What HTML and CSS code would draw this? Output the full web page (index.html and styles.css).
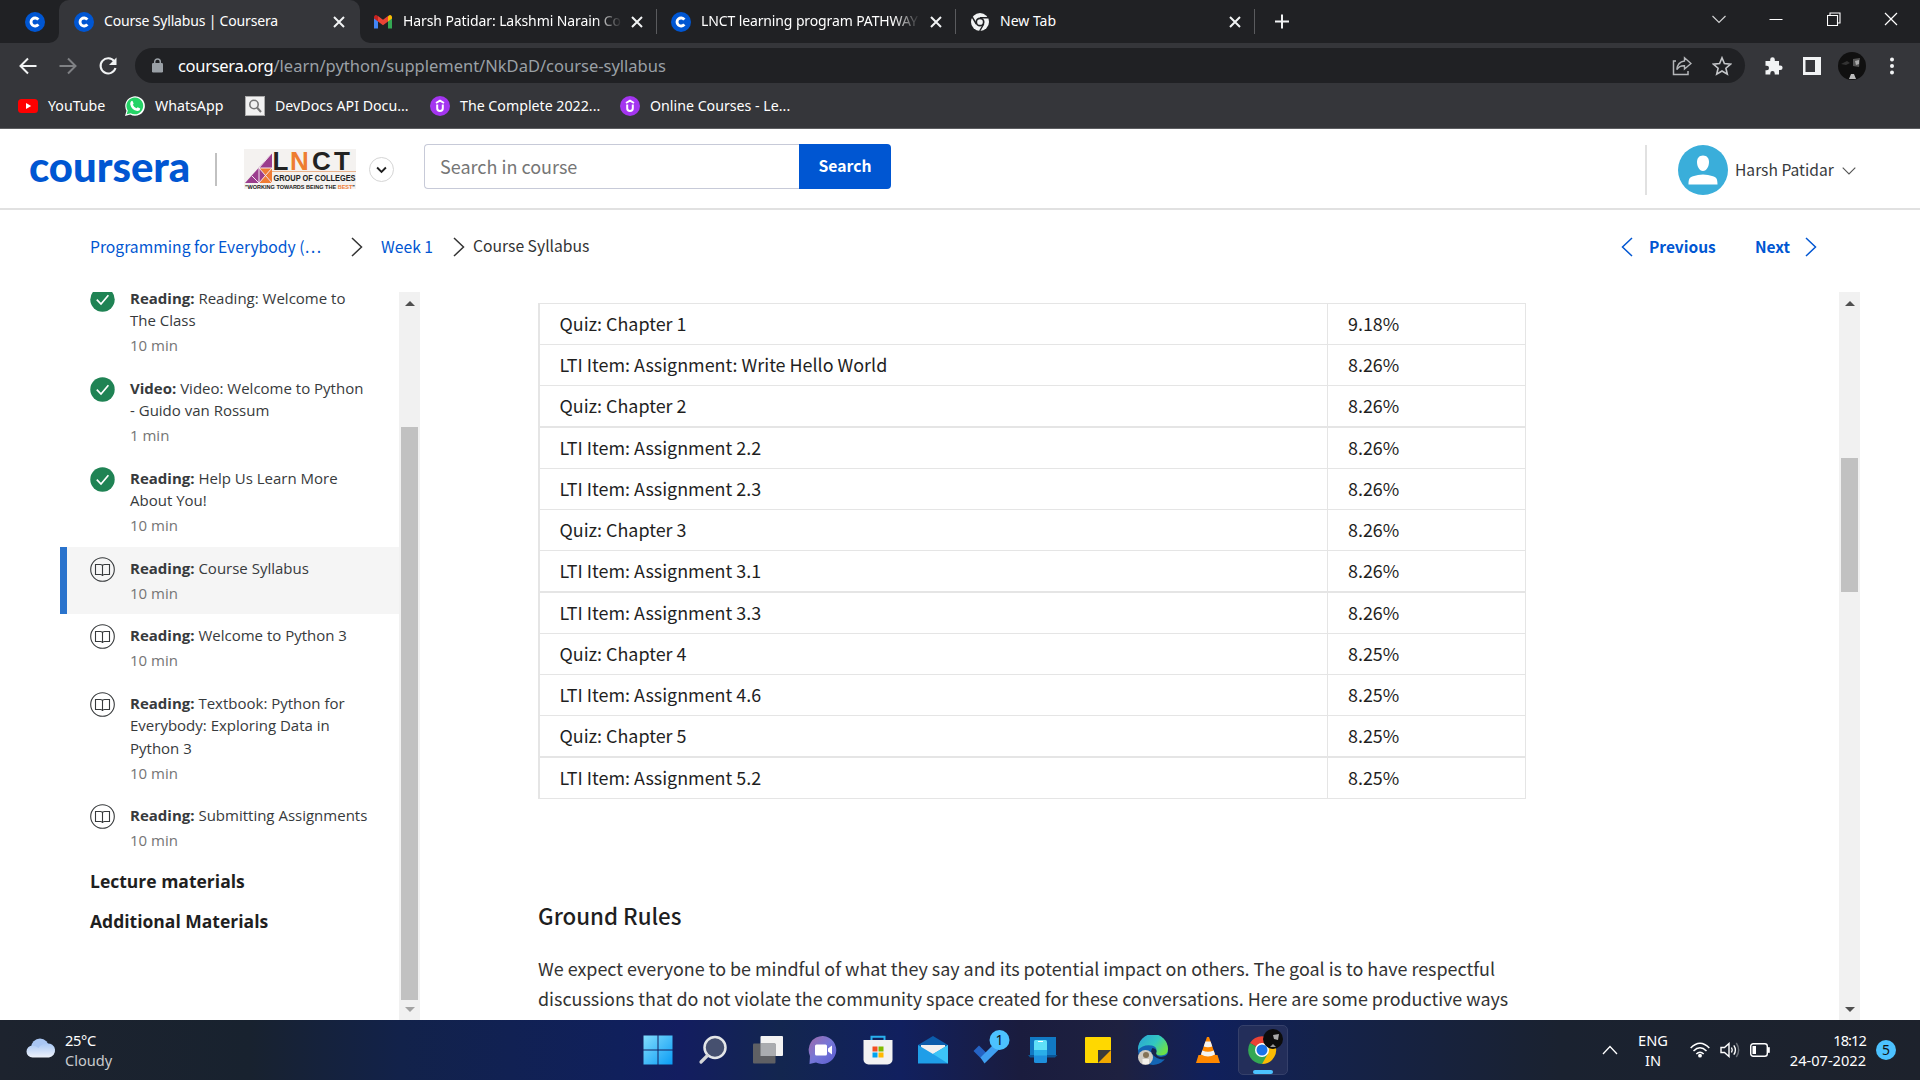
FILE: index.html
```html
<!DOCTYPE html>
<html lang="en">
<head>
<meta charset="utf-8">
<title>Course Syllabus | Coursera</title>
<link rel="stylesheet" href="styles.css">
</head>
<body>
<svg class="defs" width="0" height="0">
  <defs>
    <symbol id="i-c" viewBox="0 0 20 20"><circle cx="10" cy="10" r="10" fill="#0056d2"/><path d="M13.3 7.7A4 4 0 1 0 13.3 12.3" fill="none" stroke="#fff" stroke-width="2.9"/></symbol>
    <symbol id="i-x" viewBox="0 0 12 12"><path d="M1 1L11 11M11 1L1 11" fill="none" stroke="#f1f3f4" stroke-width="2"/></symbol>
    <symbol id="i-udemy" viewBox="0 0 20 20"><circle cx="10" cy="10" r="10" fill="#a435f0"/><path d="M6 7L10 4.700L14 7M7.200 8.500V12.200A2.800 2.800 0 0 0 12.800 12.200V8.500" fill="none" stroke="#fff" stroke-width="2"/></symbol>
    <symbol id="i-right" viewBox="0 0 12 20"><path d="M1 1L10.5 10L1 19" fill="none" stroke="currentColor" stroke-width="1.5"/></symbol>
    <symbol id="i-done" viewBox="0 0 25 25"><circle cx="12.5" cy="12.5" r="12.2" fill="#1f8354"/><path d="M6.8 12.6L11 17L18.4 8.3" fill="none" stroke="#fff" stroke-width="1.7"/></symbol>
    <symbol id="i-book" viewBox="0 0 25 25"><g fill="none" stroke="#373a3c" stroke-width="1.1"><circle cx="12.5" cy="12.5" r="11.8"/><path d="M5.5 7.5H10.5Q12.5 7.5 12.5 9.3Q12.5 7.5 14.5 7.5H19.5V17.5H14.5Q12.5 17.5 12.5 19Q12.5 17.5 10.5 17.5H5.5ZM12.5 9V19"/></g></symbol>
  </defs>
</svg>

<header class="browser">
  <div class="tabs">
    <div class="tab pinned"><svg class="fav"><use href="#i-c"/></svg></div>
    <div class="tab active"><svg class="fav"><use href="#i-c"/></svg><span class="title">Course Syllabus | Coursera</span><svg class="x"><use href="#i-x"/></svg></div>
    <div class="tab gmail">
      <svg class="fav" viewBox="0 0 20 20"><path d="M1 5v11.5h4V8z" fill="#4285f4"/><path d="M15 8v8.500h4V5z" fill="#34a853"/><path d="M15 4.500v5L19 6.500V5a2 2 0 0 0-3.200-1.500z" fill="#fbbc04"/><path d="M5 9.500v-5.500l5 3.800l5-3.800v5.500l-5 3.800z" fill="#ea4335"/><path d="M1 5v1.500l4 3V4.300L4.200 3.500A2 2 0 0 0 1 5z" fill="#c5221f"/></svg>
      <span class="title fade">Harsh Patidar: Lakshmi Narain Co</span><svg class="x"><use href="#i-x"/></svg></div>
    <div class="tab lnct"><svg class="fav"><use href="#i-c"/></svg><span class="title fade">LNCT learning program PATHWAY</span><svg class="x"><use href="#i-x"/></svg></div>
    <div class="tab newtab">
      <svg class="fav" viewBox="0 0 20 20"><circle cx="10" cy="10" r="9" fill="#f1f3f4"/><circle cx="10" cy="10" r="3.700" fill="#f1f3f4" stroke="#202124" stroke-width="1.700"/><path d="M10 5.800H18M6.300 12L2.300 5.200M13.700 12L9.700 19" stroke="#202124" stroke-width="1.500"/></svg>
      <span class="title">New Tab</span><svg class="x"><use href="#i-x"/></svg></div>
    <svg class="plus" viewBox="0 0 16 16"><path d="M8 1V15M1 8H15" stroke="#f1f3f4" stroke-width="2"/></svg>
    <div class="winctl">
      <svg viewBox="0 0 14 14"><path d="M.5 4L7 10.500L13.500 4" fill="none" stroke="#d0d1d2" stroke-width="1.200"/></svg>
      <svg viewBox="0 0 14 14"><path d="M.5 7.500H13.500" stroke="#fff"/></svg>
      <svg viewBox="0 0 14 14"><path d="M.5 3.500H10.500V13.500H.5ZM3 3V1H13V11H11" fill="none" stroke="#fff" stroke-width="1.100"/></svg>
      <svg viewBox="0 0 14 14"><path d="M1 1L13 13M13 1L1 13" stroke="#fff" stroke-width="1.200"/></svg>
    </div>
  </div>
  <div class="toolbar">
    <svg class="nav" viewBox="0 0 20 20"><path d="M18.500 10H3M10 2.500L2.500 10L10 17.500" fill="none" stroke="#f1f3f4" stroke-width="2"/></svg>
    <svg class="nav" viewBox="0 0 20 20"><path d="M1.500 10H17M10 2.500L17.500 10L10 17.500" fill="none" stroke="#7f8184" stroke-width="2"/></svg>
    <svg class="nav" viewBox="0 0 20 20"><path d="M16.300 5.300A7.600 7.600 0 1 0 17.500 12" fill="none" stroke="#f1f3f4" stroke-width="2.100"/><path d="M18.500 1.500V9H11Z" fill="#f1f3f4"/></svg>
    <div class="omnibox">
      <svg class="lock" viewBox="0 0 11 15"><rect y="5" width="11" height="9.500" rx="1.200" fill="#9aa0a6"/><path d="M2.700 6V3.700a2.800 2.800 0 0 1 5.600 0V6" fill="none" stroke="#9aa0a6" stroke-width="1.500"/></svg>
      <span class="url"><span class="host">coursera.org</span><span class="path">/learn/python/supplement/NkDaD/course-syllabus</span></span>
      <svg class="share" viewBox="0 0 20 20"><path d="M4 5H1.500V18.500H16V15" fill="none" stroke="#b4b6b9" stroke-width="1.500"/><path d="M12.500 1.800L19 7.500L12.500 13V9.800Q7.500 9.500 4.800 13.500Q5.500 6 12.500 5Z" fill="none" stroke="#b4b6b9" stroke-width="1.400"/></svg>
      <svg class="star" viewBox="0 0 20 20"><path d="M10 1.800L12.400 7.600L18.600 8.100L13.900 12.200L15.300 18.200L10 15L4.700 18.200L6.100 12.200L1.400 8.100L7.600 7.600Z" fill="none" stroke="#c4c6c9" stroke-width="1.600"/></svg>
    </div>
    <svg class="ext" viewBox="0 0 20 20"><path d="M1.500 5h4.700V3.500a2.300 2.300 0 0 1 4.600 0V5H15v4.500h1.300a2.300 2.300 0 0 1 0 4.600H15V18.500h-4.300v-1.200a2.200 2.200 0 0 0-4.400 0v1.200H1.500v-4.300h1.300a2.200 2.200 0 0 0 0-4.400H1.500z" fill="#f1f3f4"/></svg>
    <svg class="panel" viewBox="0 0 20 20"><path d="M1 1h18v18H1zM3.500 4v12h9.500V4z" fill="#f1f3f4" fill-rule="evenodd"/></svg>
    <svg class="me" viewBox="0 0 28 28"><circle cx="14" cy="14" r="14" fill="#101010"/><path d="M15 7l7-1l-1 9l-6-1z" fill="#555"/><path d="M17 9l4-1v4l-3 1z" fill="#aaa"/><path d="M3 12l6-3l3 2l-4 2z" fill="#333"/><path d="M13 22h3l2 5h-7z" fill="#bbb"/></svg>
    <svg class="dots" viewBox="0 0 4 18"><circle cx="2" cy="2.500" r="2" fill="#f1f3f4"/><circle cx="2" cy="9" r="2" fill="#f1f3f4"/><circle cx="2" cy="15.500" r="2" fill="#f1f3f4"/></svg>
  </div>
  <div class="bookmarks">
    <div class="bm b1"><svg class="fav" viewBox="0 0 20 20"><rect y="3" width="20" height="14" rx="3.500" fill="#f00"/><path d="M8 7V13L13.200 10Z" fill="#fff"/></svg><span>YouTube</span></div>
    <div class="bm b2"><svg class="fav" viewBox="0 0 20 20"><path d="M0 20L1.500 14.800A9.800 9.800 0 1 1 5.300 18.600Z" fill="#fff"/><path d="M1.700 18.300L2.800 14.500A8.400 8.400 0 1 1 5.700 17.200Z" fill="#25d366"/><path d="M6.200 5.200Q7.300 4.300 7.800 5.500L8.600 7.400Q8.500 8.200 7.800 8.800Q9 11.300 11.500 12.300L12.700 11.200L15.200 12.500Q15 15 12.300 15Q6.500 14 5.200 8.200Q5.100 6.200 6.200 5.200Z" fill="#fff"/></svg><span>WhatsApp</span></div>
    <div class="bm b3"><svg class="fav" viewBox="0 0 20 20"><rect x=".5" y=".5" width="19" height="19" fill="#f1f1f1" stroke="#aaa"/><circle cx="9" cy="8.500" r="4.200" fill="none" stroke="#777" stroke-width="1.600"/><path d="M12 11.500L16 16" stroke="#777" stroke-width="2"/></svg><span>DevDocs API Docu...</span></div>
    <div class="bm b4"><svg class="fav"><use href="#i-udemy"/></svg><span>The Complete 2022...</span></div>
    <div class="bm b5"><svg class="fav"><use href="#i-udemy"/></svg><span>Online Courses - Le...</span></div>
  </div>
</header>

<main class="page">
  <div class="site">
    <div class="logo">coursera</div>
    <div class="rule1"></div>
    <svg class="college" viewBox="0 0 112 40">
      <rect width="112" height="40" fill="#f4f2f0"/>
      <path d="M1 34L28 4V34Z" fill="#9b3d8d"/><path d="M15 19H28V34Z" fill="#f07c35"/><path d="M15 34L21 26L28 34Z" fill="#f07c35"/><path d="M8 27L15 34V19L28 34M15 19L28 4M15 19H28L15 34" fill="none" stroke="#f3e6ee" stroke-width="1"/>
      <text x="28.500" y="21" class="lg">L</text><text x="46" y="21" class="lg orange">N</text><text x="68" y="21" class="lg">C</text><text x="90" y="21" class="lg">T</text>
      <path d="M28 22.500H112" stroke="#e8a070" stroke-width=".8"/>
      <text x="29.500" y="32" class="md" textLength="82" lengthAdjust="spacingAndGlyphs">GROUP OF COLLEGES</text>
      <text x="1" y="39.500" class="sm" textLength="110" lengthAdjust="spacingAndGlyphs">"WORKING TOWARDS BEING THE <tspan fill="#f07c35">BEST</tspan>"</text>
    </svg>
    <div class="drop"><svg viewBox="0 0 10 7"><path d="M1 1.200L5 5.200L9 1.200" fill="none" stroke="#1f1f1f" stroke-width="1.700"/></svg></div>
    <div class="search"><div class="field">Search in course</div><div class="btn">Search</div></div>
    <div class="user">
      <svg class="avatar" viewBox="0 0 50 50"><circle cx="25" cy="25" r="25" fill="#3aaeda"/><path d="M25 10.500c4 0 6 2.900 6 6.500c0 4.300-2.300 9-6 9s-6-4.700-6-9c0-3.600 2-6.500 6-6.500zM10.500 39.500c0-5 .8-7.200 4.500-8.200q5-1.800 10-1.800t10 1.800c3.700 1 4.500 3.200 4.500 8.200z" fill="#fff"/></svg>
      <span class="name">Harsh Patidar</span>
      <svg class="caret" viewBox="0 0 14 8"><path d="M.7.700L7 7L13.300.7" fill="none" stroke="#555" stroke-width="1.100"/></svg>
    </div>
  </div>
  <div class="crumbs">
    <span class="link c1">Programming for Everybody (…</span><svg class="chev v1"><use href="#i-right"/></svg>
    <span class="link c2">Week 1</span><svg class="chev v2"><use href="#i-right"/></svg>
    <span class="c3">Course Syllabus</span>
    <div class="pager"><svg class="chev flip"><use href="#i-right"/></svg><b class="p1">Previous</b><b class="p2">Next</b><svg class="chev"><use href="#i-right"/></svg></div>
  </div>
  <div class="body">
    <aside class="side">
      <div class="list">
        <div class="item first"><svg><use href="#i-done"/></svg><div><p><b>Reading:</b> Reading: Welcome to<br>The Class</p><small>10 min</small></div></div>
        <div class="item"><svg><use href="#i-done"/></svg><div><p><b>Video:</b> Video: Welcome to Python<br>- Guido van Rossum</p><small>1 min</small></div></div>
        <div class="item"><svg><use href="#i-done"/></svg><div><p><b>Reading:</b> Help Us Learn More<br>About You!</p><small>10 min</small></div></div>
        <div class="item current"><svg><use href="#i-book"/></svg><div><p><b>Reading:</b> Course Syllabus</p><small>10 min</small></div></div>
        <div class="item"><svg><use href="#i-book"/></svg><div><p><b>Reading:</b> Welcome to Python 3</p><small>10 min</small></div></div>
        <div class="item"><svg><use href="#i-book"/></svg><div><p><b>Reading:</b> Textbook: Python for<br>Everybody: Exploring Data in<br>Python 3</p><small>10 min</small></div></div>
        <div class="item last"><svg><use href="#i-book"/></svg><div><p><b>Reading:</b> Submitting Assignments</p><small>10 min</small></div></div>
        <h3>Lecture materials</h3>
        <h3>Additional Materials</h3>
      </div>
      <div class="bar left"><i class="up"></i><div class="thumb"></div><i class="down dim"></i></div>
    </aside>
    <article class="content">
      <div class="grades">
        <div class="row"><span>Quiz: Chapter 1</span><span>9.18%</span></div>
        <div class="row"><span>LTI Item: Assignment: Write Hello World</span><span>8.26%</span></div>
        <div class="row thick"><span>Quiz: Chapter 2</span><span>8.26%</span></div>
        <div class="row"><span>LTI Item: Assignment 2.2</span><span>8.26%</span></div>
        <div class="row"><span>LTI Item: Assignment 2.3</span><span>8.26%</span></div>
        <div class="row"><span>Quiz: Chapter 3</span><span>8.26%</span></div>
        <div class="row thick"><span>LTI Item: Assignment 3.1</span><span>8.26%</span></div>
        <div class="row"><span>LTI Item: Assignment 3.3</span><span>8.26%</span></div>
        <div class="row"><span>Quiz: Chapter 4</span><span>8.25%</span></div>
        <div class="row"><span>LTI Item: Assignment 4.6</span><span>8.25%</span></div>
        <div class="row thick"><span>Quiz: Chapter 5</span><span>8.25%</span></div>
        <div class="row"><span>LTI Item: Assignment 5.2</span><span>8.25%</span></div>
      </div>
      <h2>Ground Rules</h2>
      <p class="para">We expect everyone to be mindful of what they say and its potential impact on others. The goal is to have respectful<br>discussions that do not violate the community space created for these conversations. Here are some productive ways</p>
    </article>
    <div class="bar right"><i class="up"></i><div class="thumb"></div><i class="down"></i></div>
  </div>
</main>

<footer class="taskbar">
  <div class="weather">
    <svg viewBox="0 0 30 20"><defs><linearGradient id="cl" x2="0" y2="1"><stop stop-color="#a9c8f5"/><stop offset="1" stop-color="#eef2fa"/></linearGradient></defs><circle cx="14" cy="9.500" r="9" fill="#a9c6f3"/><path d="M6.500 19.500A6 6 0 0 1 6.500 7.500Q10 7.500 12.500 10Q15 5.500 21 5.500A7 7 0 0 1 23 19.500Z" fill="url(#cl)"/></svg>
    <div><div class="w1">25°C</div><div class="w2">Cloudy</div></div>
  </div>
  <div class="apps">
    <div class="app"><svg viewBox="0 0 30 30"><defs><linearGradient id="win" x2="1" y2="1"><stop stop-color="#82dcfc"/><stop offset="1" stop-color="#0a9cf5"/></linearGradient></defs><path d="M.5.500H14.500V14.500H.5ZM15.500.500H29.500V14.500H15.500ZM.5 15.500H14.500V29.500H.5ZM15.500 15.500H29.500V29.500H15.500Z" fill="url(#win)"/></svg></div>
    <div class="app"><svg viewBox="0 0 30 30"><circle cx="17" cy="12.500" r="10.500" fill="#46506f" stroke="#e4e6e8" stroke-width="2.500"/><path d="M9.500 20.500L3 27" stroke="#d4d6d8" stroke-width="3.200" stroke-linecap="round"/></svg></div>
    <div class="app"><svg viewBox="0 0 30 30"><rect x="7.500" y="1" width="22.500" height="20" rx="1" fill="#f3f3f3"/><rect x="0" y="8.500" width="22.500" height="20" rx="1" fill="#5f6064"/><path d="M7.500 8.500h15V21h-15z" fill="#aaacb0"/></svg></div>
    <div class="app"><svg viewBox="0 0 30 30"><defs><linearGradient id="ch" x2="1" y2="1"><stop stop-color="#a06aa8"/><stop offset=".5" stop-color="#7577d8"/><stop offset="1" stop-color="#5a5bd0"/></linearGradient></defs><path d="M15 1A14 14 0 1 1 8 27.500L1.500 29L2 21A14 14 0 0 1 15 1Z" fill="url(#ch)"/><rect x="7" y="9.500" width="12" height="11" rx="1.500" fill="#fff"/><path d="M20 13.500L24 10.500V19.500L20 16.500Z" fill="#fff"/></svg></div>
    <div class="app"><svg viewBox="0 0 30 30"><path d="M8.500 7V1.800H21.500V7" fill="none" stroke="#28b0ee" stroke-width="2"/><path d="M.5 5H29.500V24.500A5 5 0 0 1 24.500 29.500H5.500A5 5 0 0 1 .5 24.500Z" fill="#f2f2f2"/><path d="M9.500 11.500h5v5h-5z" fill="#f25022"/><path d="M15.500 11.500h5v5h-5z" fill="#7fba00"/><path d="M9.500 17.500h5v5h-5z" fill="#00a4ef"/><path d="M15.500 17.500h5v5h-5z" fill="#ffb900"/></svg></div>
    <div class="app"><svg viewBox="0 0 30 30"><path d="M0 10L15 1L30 10V15H0Z" fill="#0b5cab"/><path d="M3 10H27V20H3Z" fill="#f0f0f0"/><path d="M0 10L15 19L30 10V28.500H0Z" fill="#1f9ee8"/><path d="M30 10L15 19L30 28.500Z" fill="#3cc4f7"/></svg></div>
    <div class="app"><svg class="todo" viewBox="0 0 37 37"><path d="M.5 22L6 16.500L15.500 26L10.500 32Z" fill="#2563c4"/><path d="M7.500 28.500L25 11L30 16.500L11.500 34.500Z" fill="#3f9ff0"/><circle cx="26.500" cy="11" r="10" fill="#4cc2ff"/><text x="26.500" y="16.300" class="badge">1</text></svg></div>
    <div class="app"><svg viewBox="0 0 30 30"><path d="M2 2H28V20H2Z" fill="#1179c4"/><path d="M0 20H29.500L27 22.500H2Z" fill="#0a5596"/><rect x="6" y="5" width="13" height="23" rx="1.500" fill="#1e8fdc"/><path d="M6 6.500A1.500 1.500 0 0 1 7.500 5H17.500A1.500 1.500 0 0 1 19 6.500V15H6Z" fill="#5fe0f8"/><path d="M6 15h13v5.500H6z" fill="#2aaee8"/><path d="M10 6.500h5" stroke="#fff"/></svg></div>
    <div class="app"><svg viewBox="0 0 30 30"><rect x="2" y="2" width="26" height="26" rx="1" fill="#ffd800"/><path d="M15 15H28V28H15Z" fill="#f0a800"/><path d="M15 15H28L15 28Z" fill="#3a3a3a"/></svg></div>
    <div class="app"><svg viewBox="0 0 30 30"><defs><linearGradient id="ed" x2="1" y2=".6"><stop stop-color="#2a9fd8"/><stop offset=".6" stop-color="#32c8c0"/><stop offset="1" stop-color="#6be04a"/></linearGradient></defs><circle cx="15" cy="15" r="15" fill="#1465b4"/><path d="M0 14A15 15 0 0 1 30 14Q30 20.500 23 20.500Q17 20 18 17.500Q20 12 14 10.500Q5 9 0 15Z" fill="url(#ed)"/><path d="M18.500 17Q17 21 23 22Q27 22 30 19V14L31 23L28 24Q20 26 14 19Q12 16 14.500 13Q19 14 18.500 17Z" fill="#16234c"/><circle cx="7.500" cy="22.500" r="7.500" fill="#cfcbc4"/><circle cx="8" cy="20" r="3" fill="#857357"/><path d="M4.500 29V24H11V29Z" fill="#f4f1ec"/></svg></div>
    <div class="app"><svg viewBox="0 0 30 30"><path d="M5.500 20H24.500L27 28H3Z" fill="#ff8800"/><path d="M14 2H16L23 22Q15 26 7 22Z" fill="#ff8800"/><path d="M12.400 6.500H17.600L19.300 11.500Q15 13 10.700 11.500ZM9.300 15.500Q15 18 20.700 15.500L22 19.500Q15 23.500 8 19.500Z" fill="#f4f4f4"/></svg></div>
    <div class="app on"><svg class="chrome" viewBox="0 0 36 36"><path d="M14 21L2 14A14 14 0 0 1 26 14H14Z" fill="#ea4335"/><path d="M14 21H26.500L14 35A14 14 0 0 1 2 14Z" fill="#34a853"/><path d="M14 14H26.200A14 14 0 0 1 14 35L20 24.500Z" fill="#fbbc04"/><circle cx="14" cy="21" r="7" fill="#fff"/><circle cx="14" cy="21" r="5.500" fill="#1a73e8"/><circle cx="25" cy="10" r="10" fill="#0c0c0c"/><path d="M25 6l6-1l-1 6l-4-1z" fill="#aaa"/><path d="M22 18l3-3l3 3z" fill="#999"/></svg></div>
  </div>
  <div class="tray">
    <svg class="upc" viewBox="0 0 16 10"><path d="M1 9L8 1.500L15 9" fill="none" stroke="#fff" stroke-width="1.300"/></svg>
    <div class="lang"><div>ENG</div><div>IN</div></div>
    <svg class="wifi" viewBox="0 0 20 16"><g fill="none" stroke="#fff" stroke-width="1.500"><path d="M.7 6Q10-3.500 19.300 6M3.500 9Q10 2.500 16.500 9M6.300 12Q10 8.500 13.700 12"/></g><circle cx="10" cy="13.700" r="1.900" fill="#fff"/></svg>
    <svg class="vol" viewBox="0 0 20 16"><g fill="none" stroke="#fff" stroke-width="1.400"><path d="M1 5.500H4.500L9 1.500V14.500L4.500 10.500H1Z"/><path d="M11.500 5.500Q13 8 11.500 10.500M13.800 3.300Q17 8 13.800 12.700"/><path d="M16.300 1Q21 8 16.300 15" stroke="#6b7078"/></g></svg>
    <svg class="bat" viewBox="0 0 20 14"><rect x=".7" y=".7" width="16.600" height="12.600" rx="2.500" fill="none" stroke="#fff" stroke-width="1.400"/><rect x="2.500" y="3" width="3.500" height="8" fill="#fff"/><path d="M18 4.500h1.500v5H18z" fill="#fff" stroke="#fff" stroke-width=".6"/></svg>
    <div class="clock"><div class="k1">18:12</div><div>24-07-2022</div></div>
    <div class="count">5</div>
  </div>
</footer>
</body>
</html>
```
FILE: styles.css
```css
* { box-sizing: border-box; margin: 0; padding: 0; }
body { width: 1920px; height: 1080px; overflow: hidden; display: flex; flex-direction: column; background: #fff; font-family: "Open Sans", sans-serif; }
svg { flex: none; display: block; }
.defs { position: absolute; }
span, b, .logo { white-space: nowrap; }

/* Browser chrome */
.browser { height: 129px; background: #35363a; border-bottom: 1px solid #5d5e61; color: #fff; font-family: "Noto Sans", sans-serif; font-size: 14.200px; }
.fav { width: 20px; height: 20px; }
.tabs { height: 43px; display: flex; align-items: center; background: #35363a; font-size: 14px; letter-spacing: -.18px; }
.tabs > * { background: #202124; }
.tab { height: 43px; display: flex; align-items: center; }
.tabs .pinned { width: 59px; padding-left: 25px; border-bottom-right-radius: 10px; }
.tabs .active { width: 301px; padding: 0 15px; background: linear-gradient(#202124 0 20px, #35363a 20px); position: relative; z-index: 0; }
.active::before { content: ""; position: absolute; inset: 0; z-index: -1; background: #35363a; border-radius: 10px 10px 0 0; }
.title { display: block; margin: 0 0 2px 10px; flex: 1; overflow: hidden; }
.fade { mask-image: linear-gradient(90deg, #000 88%, transparent 100%); }
.x { width: 12px; height: 12px; }
.gmail, .lnct, .newtab { position: relative; }
.gmail::after, .lnct::after, .newtab::after { content: ""; position: absolute; right: 0; top: 9px; width: 1px; height: 25px; background: #5a5b5e; }
.gmail { width: 297px; padding: 0 14px 0 13px; }
.tabs .gmail { border-bottom-left-radius: 10px; }
.gmail .title, .lnct .title { flex: none; width: 219px; margin-right: 9px; }
.gmail .title { letter-spacing: -.1px; }
.lnct { width: 299px; padding-left: 14px; }
.lnct .title { letter-spacing: -.12px; margin-right: 10px; }
.newtab { width: 299px; padding: 0 14px; }
.newtab .title { letter-spacing: 0; }
.plus { box-sizing: content-box; width: 16px; height: 16px; padding: 13.500px 0 13.500px 19px; }
.winctl { flex: 1; height: 43px; display: flex; justify-content: flex-end; align-items: center; gap: 43.500px; padding: 0 22px 6px 0; }
.winctl svg { width: 14px; height: 14px; }

.toolbar { height: 45px; display: flex; align-items: center; padding: 0 25px 0 18px; }
.nav { width: 20px; height: 20px; margin-right: 20px; }
.nav:nth-child(3) { margin-right: 17px; }
.omnibox { width: 1610px; height: 35px; border-radius: 18px; background: #202124; display: flex; align-items: center; padding-left: 17px; margin-right: 19px; font-size: 16.500px; }
.lock { width: 11px; height: 15px; margin: 0 15px 0 0; }
.host { letter-spacing: -.3px; }
.path { color: #9aa0a6; }
.share { width: 20px; height: 20px; margin-left: auto; }
.star { width: 20px; height: 20px; margin: 0 13px 0 20px; }
.ext { width: 20px; height: 20px; margin-right: 18px; }
.panel { width: 20px; height: 20px; margin-right: 16px; }
.me { width: 28px; height: 28px; margin-right: 24px; }
.dots { width: 4px; height: 18px; }

.bookmarks { height: 40px; display: flex; align-items: center; padding: 0 0 4px 18px; }
.bm { display: flex; align-items: center; gap: 10px; }
.bm span { margin-bottom: 2px; }
.b1 { width: 107px; } .b2 { width: 120px; } .b3 { width: 185px; } .b4 { width: 190px; }

/* Course page */
.page { height: 891px; font-family: "Noto Sans CJK JP", sans-serif; color: #1f1f1f; }
.site { height: 81px; display: flex; align-items: center; padding: 2px 0 0 30px; border-bottom: 2px solid #e1e1e1; }
.logo { width: 159px; font: 900 41.800px/41px Lato, sans-serif; color: #0056d2; padding-bottom: 6px; margin-left: -1px; margin-right: 1px; }
.rule1 { width: 2px; height: 33px; background: #c1c1c1; margin: 0 27px 0 26px; }
.college { width: 112px; height: 40px; margin: 0 13px 2px 0; }
.college text { font-family: "Liberation Sans", sans-serif; font-weight: 700; fill: #222; }
.college .orange { fill: #ee7d31; }
.lg { font-size: 26px; } .md { font-size: 8.500px; } .sm { font-size: 5.500px; }
.drop { width: 25px; height: 25px; border: 1px solid #d5d5d5; border-radius: 50%; display: grid; place-items: center; margin-right: 30px; }
.drop svg { width: 11px; height: 8px; }
.search { display: flex; width: 467px; height: 45px; margin-bottom: 6px; }
.field { width: 375px; border: 1px solid #c7cad8; border-right: 0; border-radius: 4px 0 0 4px; padding-left: 15px; font-size: 18px; line-height: 43px; color: #767676; }
.btn { width: 92px; background: #0056d2; color: #fff; border-radius: 0 4px 4px 0; text-align: center; font-size: 15.700px; font-weight: 700; line-height: 43px; }
.user { display: flex; align-items: center; height: 50px; margin-left: auto; padding-left: 31px; width: 275px; border-left: 2px solid #e1e1e1; }
.avatar { width: 50px; height: 50px; margin-right: 7px; }
.name { width: 107px; font-size: 15.600px; color: #373a3c; margin-bottom: 1px; }
.caret { width: 14px; height: 8px; margin-top: 3px; }

.crumbs { height: 82px; display: flex; align-items: center; padding: 0 103px 8px 90px; font-size: 15.700px; color: #333; }
.link { color: #0056d2; }
.chev { width: 12px; height: 20px; }
.crumbs span { margin-bottom: 1px; }
.c1 { width: 261px; } .v1 { margin-right: 18px; } .c2 { width: 72px; } .v2 { margin-right: 8px; }
.crumbs .c3 { margin-bottom: 3px; }
.pager { display: flex; align-items: center; margin-left: auto; color: #0056d2; font-size: 15.500px; }
.pager b { margin-bottom: 2px; }
.flip { transform: scaleX(-1); }
.p1 { width: 106px; margin-left: 16px; } .p2 { width: 50px; }

.body { height: 728px; display: flex; }
.side { width: 420px; display: flex; padding-left: 60px; font-family: "Open Sans", sans-serif; }
.list { width: 339px; height: 728px; overflow: hidden; }
.item { display: flex; padding: 10px 0 10px 30px; font-size: 15px; line-height: 22.500px; color: #373a3c; }
.item svg { width: 25px; height: 25px; margin-right: 15px; }
.item.first { margin-top: -15.500px; }
.item.last { padding-bottom: 9px; }
.item.current { background: #f5f5f5; border-left: 7px solid #2a73cc; padding-left: 23px; }
.item small { display: block; font-size: 15px; margin-top: 2.500px; color: #757575; }
.item b { font-weight: 700; }
.list h3 { font-size: 17.500px; line-height: 40px; font-weight: 700; padding-left: 30px; }
.bar { width: 21px; height: 728px; background: #f1f1f1; display: flex; flex-direction: column; align-items: center; }
.up { border: 5px solid transparent; border-top: 0; border-bottom: 5px solid #505050; margin-top: 9px; }
.down { border: 5px solid transparent; border-bottom: 0; border-top: 5px solid #505050; margin: auto 0 8px; }
.dim { border-top-color: #a3a3a3; }
.thumb { width: 17px; background: #c1c1c1; }
.left .thumb { height: 573px; margin-top: 121px; }
.right .thumb { height: 134px; margin-top: 152px; }
.content { width: 1301px; height: 728px; overflow: hidden; padding: 11px 0 0 118px; margin-right: 118px; }
.grades { width: 988px; border: 1px solid #e5e5e5; border-left-width: 2px; border-bottom: 0; font-size: 17.920px; }
.row { display: grid; grid-template-columns: 787px 1fr; height: 41px; border-bottom: 1px solid #e5e5e5; line-height: 38px; }
.row.thick { height: 42px; border-bottom-width: 2px; }
.row span { padding-left: 19.500px; }
.row span + span { padding-left: 20px; border-left: 1px solid #e5e5e5; }
.content h2 { font-size: 22.300px; font-weight: 500; line-height: 36px; margin-top: 98px; }
.para { font-size: 17.920px; line-height: 30px; margin-top: 20px; color: #333; white-space: nowrap; }

/* Windows taskbar */
.taskbar { height: 60px; display: grid; grid-template-columns: 630px 660px 1fr; color: #fff; font: 14.600px/20px "Noto Sans", sans-serif; background: linear-gradient(90deg, #1d232e, #18222f 250px, #12224a 400px, #10205c 620px, #131d60 680px, #13264f 780px, #11205f 900px, #1a1c3e 1020px, #1e2140 1120px, #10205c 1210px, #14224a 1320px, #1a2230 1560px, #1d222c); }
.weather { display: flex; align-items: center; padding-left: 26px; gap: 9px; }
.weather svg { width: 30px; height: 20px; margin-bottom: 4px; }
.w1 { letter-spacing: -.3px; }
.w2 { color: #c8cacd; }
.apps { display: grid; grid-template-columns: repeat(12, 55px); align-items: center; justify-items: center; }
.app svg { width: 30px; height: 30px; }
.app .todo { width: 37px; height: 37px; margin: -5px 0 0 7px; }
.badge { font-size: 14px; fill: #111; text-anchor: middle; }
.on { width: 50px; height: 50px; border: 1px solid #35406a; border-radius: 5px; background: #232e5a; display: flex; flex-direction: column; align-items: center; }
.on::after { content: ""; width: 20px; height: 4px; border-radius: 2px; background: #4cc2ff; margin-top: auto; }
.on .chrome { width: 36px; height: 36px; margin: 3px 0 0 6px; }
.tray { display: flex; align-items: center; padding-left: 312px; }
.upc { width: 16px; height: 10px; }
.lang { width: 72px; text-align: center; padding-right: 2px; }
.wifi { width: 20px; height: 16px; } .vol { width: 20px; height: 16px; margin-left: 10px; } .bat { width: 20px; height: 14px; margin-left: 10px; }
.weather > div, .lang, .clock { margin-bottom: 1px; }
.clock { width: 96px; text-align: right; margin-right: 10px; }
.k1 { letter-spacing: -.9px; }
.count { width: 20px; height: 20px; border-radius: 50%; background: #4cc2ff; color: #111; font-size: 14px; text-align: center; }
```
